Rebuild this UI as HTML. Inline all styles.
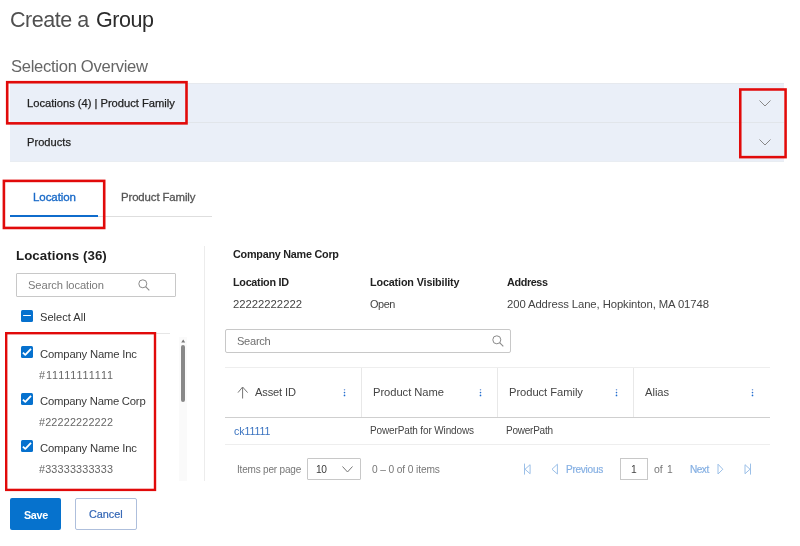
<!DOCTYPE html>
<html><head><meta charset="utf-8"><title>Create a Group</title>
<style>
html,body{margin:0;padding:0;background:#fff;width:800px;height:546px;overflow:hidden;position:relative}
body{font-family:"Liberation Sans",sans-serif}
.t{position:absolute;line-height:1;white-space:nowrap;will-change:transform}
.r{position:absolute}
</style></head><body>
<div class="t" style="left:10.4px;top:10px;font-size:21.5px;color:#333;font-weight:normal;letter-spacing:-0.45px;"><span style="color:#505050">Create a</span><span style="color:#2b2b2b;margin-left:1.5px"> Group</span></div>
<div class="t" style="left:10.5px;top:59px;font-size:16.6px;color:#666;font-weight:normal;letter-spacing:-0.300px;">Selection Overview</div>
<div class="r" style="left:10px;top:83px;width:774px;height:78.5px;background:#eaeff8"></div>
<div class="r" style="left:10px;top:83px;width:774px;height:1px;background:#e6e9ee"></div>
<div class="r" style="left:10px;top:160.5px;width:774px;height:1px;background:#e9edf2"></div>
<div class="r" style="left:10px;top:122px;width:774px;height:1px;background:#e1e5ea"></div>
<div class="t" style="left:27px;top:98px;font-size:11.2px;color:#1f1f1f;font-weight:normal;letter-spacing:-0.020px;-webkit-text-stroke:0.25px currentColor;">Locations (4) | Product Family</div>
<div class="t" style="left:27px;top:137px;font-size:11.1px;color:#1f1f1f;font-weight:normal;letter-spacing:0.030px;-webkit-text-stroke:0.25px currentColor;">Products</div>
<svg class="r" style="left:759px;top:99.5px" width="12" height="7" viewBox="0 0 12 7"><path d="M0.5 0.5 L6 6 L11.5 0.5" fill="none" stroke="#888" stroke-width="1"/></svg>
<svg class="r" style="left:759px;top:138.5px" width="12" height="7" viewBox="0 0 12 7"><path d="M0.5 0.5 L6 6 L11.5 0.5" fill="none" stroke="#888" stroke-width="1"/></svg>
<div class="t" style="left:32.5px;top:192px;font-size:11.5px;color:#1b6bc8;font-weight:normal;letter-spacing:-0.067px;-webkit-text-stroke:0.35px currentColor;">Location</div>
<div class="t" style="left:120.5px;top:192px;font-size:11.4px;color:#555;font-weight:normal;letter-spacing:-0.118px;-webkit-text-stroke:0.3px currentColor;">Product Family</div>
<div class="r" style="left:11px;top:215.5px;width:201px;height:1px;background:#dedede"></div>
<div class="r" style="left:10px;top:214.5px;width:88px;height:2.5px;background:#0f6ccc"></div>
<div class="t" style="left:15.6px;top:249px;font-size:13.3px;color:#1e1e1e;font-weight:bold;letter-spacing:0.048px;">Locations (36)</div>
<div class="r" style="left:16px;top:273px;width:160px;height:23.5px;border:1px solid #c8c8c8;box-sizing:border-box;border-radius:1px"></div>
<div class="t" style="left:28px;top:280px;font-size:11.2px;color:#7a7a7a;font-weight:normal;letter-spacing:-0.087px;">Search location</div>
<svg class="r" style="left:138.4px;top:279.3px" width="12" height="12" viewBox="0 0 12 12"><circle cx="4.8" cy="4.8" r="4" fill="none" stroke="#8a8a8a" stroke-width="1"/><path d="M7.6 7.6 L11.3 11.3" stroke="#8a8a8a" stroke-width="1.1"/></svg>
<div class="r" style="left:21px;top:309.5px;width:12px;height:12px;background:#0671ce;border-radius:1.5px"></div>
<div class="r" style="left:22.8px;top:314.6px;width:8.4px;height:1.8px;background:#fff;border-radius:1px"></div>
<div class="t" style="left:40.4px;top:312px;font-size:11.1px;color:#333;font-weight:normal;letter-spacing:0.003px;">Select All</div>
<div class="r" style="left:17px;top:333px;width:153px;height:1px;background:#e6e6e6"></div>
<svg class="r" style="left:21px;top:346.2px" width="12" height="12" viewBox="0 0 12 12"><rect x="0" y="0" width="12" height="12" rx="1.5" fill="#0671ce"/><path d="M1.9 6.6 L4.3 8.9 L10 2.9" fill="none" stroke="#fff" stroke-width="1.8" stroke-linejoin="round"/></svg>
<div class="t" style="left:40px;top:349px;font-size:11.3px;color:#3a3a3a;font-weight:normal;letter-spacing:-0.189px;">Company Name Inc</div>
<div class="t" style="left:39.4px;top:370px;font-size:10.8px;color:#666;font-weight:normal;letter-spacing:0.905px;">#11111111111</div>
<svg class="r" style="left:21px;top:393.2px" width="12" height="12" viewBox="0 0 12 12"><rect x="0" y="0" width="12" height="12" rx="1.5" fill="#0671ce"/><path d="M1.9 6.6 L4.3 8.9 L10 2.9" fill="none" stroke="#fff" stroke-width="1.8" stroke-linejoin="round"/></svg>
<div class="t" style="left:40px;top:396px;font-size:11.3px;color:#3a3a3a;font-weight:normal;letter-spacing:-0.223px;">Company Name Corp</div>
<div class="t" style="left:39.4px;top:417px;font-size:10.8px;color:#666;font-weight:normal;letter-spacing:0.174px;">#22222222222</div>
<svg class="r" style="left:21px;top:440.2px" width="12" height="12" viewBox="0 0 12 12"><rect x="0" y="0" width="12" height="12" rx="1.5" fill="#0671ce"/><path d="M1.9 6.6 L4.3 8.9 L10 2.9" fill="none" stroke="#fff" stroke-width="1.8" stroke-linejoin="round"/></svg>
<div class="t" style="left:40px;top:443px;font-size:11.3px;color:#3a3a3a;font-weight:normal;letter-spacing:-0.189px;">Company Name Inc</div>
<div class="t" style="left:39.4px;top:464px;font-size:10.8px;color:#666;font-weight:normal;letter-spacing:0.174px;">#33333333333</div>
<div class="r" style="left:179.3px;top:337px;width:7.3px;height:144px;background:#fafafa"></div>
<svg class="r" style="left:180.5px;top:338.5px" width="5" height="4" viewBox="0 0 5 4"><path d="M0.2 3.4 L2.2 0.4 L4.2 3.4Z" fill="#777"/></svg>
<div class="r" style="left:181px;top:345px;width:4px;height:56.5px;background:#888;border-radius:2px"></div>
<div class="r" style="left:204px;top:246px;width:1px;height:235px;background:#ececec"></div>
<div class="r" style="left:10.25px;top:498px;width:50.75px;height:32.2px;background:#0672cd;border-radius:2px"></div>
<div class="t" style="left:23.6px;top:510px;font-size:10.8px;color:#fff;font-weight:bold;letter-spacing:-0.339px;">Save</div>
<div class="r" style="left:75.3px;top:498px;width:61.3px;height:32.2px;border:1px solid #aebfdc;box-sizing:border-box;border-radius:2px"></div>
<div class="t" style="left:89.2px;top:509px;font-size:10.9px;color:#3366b5;font-weight:normal;letter-spacing:-0.071px;-webkit-text-stroke:0.2px currentColor;">Cancel</div>
<div class="t" style="left:232.5px;top:249px;font-size:10.8px;color:#222;font-weight:bold;letter-spacing:-0.240px;">Company Name Corp</div>
<div class="t" style="left:232.5px;top:277px;font-size:10.8px;color:#222;font-weight:bold;letter-spacing:-0.281px;">Location ID</div>
<div class="t" style="left:370px;top:277px;font-size:10.8px;color:#222;font-weight:bold;letter-spacing:-0.146px;">Location Visibility</div>
<div class="t" style="left:507px;top:277px;font-size:10.8px;color:#222;font-weight:bold;letter-spacing:-0.367px;">Address</div>
<div class="t" style="left:232.5px;top:299px;font-size:11.3px;color:#444;font-weight:normal;letter-spacing:-0.016px;">22222222222</div>
<div class="t" style="left:370px;top:299px;font-size:10.9px;color:#444;font-weight:normal;letter-spacing:-0.417px;">Open</div>
<div class="t" style="left:507px;top:299px;font-size:11.3px;color:#444;font-weight:normal;letter-spacing:-0.095px;">200 Address Lane, Hopkinton, MA 01748</div>
<div class="r" style="left:225px;top:329px;width:286px;height:24.3px;border:1px solid #c8c8c8;box-sizing:border-box;border-radius:2px"></div>
<div class="t" style="left:237px;top:336px;font-size:11.1px;color:#6f6f6f;font-weight:normal;letter-spacing:-0.287px;">Search</div>
<svg class="r" style="left:491.5px;top:335px" width="12" height="12" viewBox="0 0 12 12"><circle cx="4.8" cy="4.8" r="4" fill="none" stroke="#8a8a8a" stroke-width="1"/><path d="M7.6 7.6 L11.3 11.3" stroke="#8a8a8a" stroke-width="1.1"/></svg>
<div class="r" style="left:225px;top:367px;width:545px;height:1px;background:#eeeeee"></div>
<div class="r" style="left:225px;top:417px;width:545px;height:1px;background:#cfcfcf"></div>
<div class="r" style="left:225px;top:443.5px;width:545px;height:1px;background:#eeeeee"></div>
<div class="r" style="left:361px;top:368px;width:1px;height:49px;background:#e8e8e8"></div>
<div class="r" style="left:497px;top:368px;width:1px;height:49px;background:#e8e8e8"></div>
<div class="r" style="left:633px;top:368px;width:1px;height:49px;background:#e8e8e8"></div>
<svg class="r" style="left:237px;top:386px" width="11" height="13" viewBox="0 0 11 13"><path d="M5.6 12.5 V1.2 M1 6.6 L5.6 1 L10.6 6.6" fill="none" stroke="#777" stroke-width="1"/></svg>
<div class="t" style="left:255px;top:387px;font-size:11.1px;color:#444;font-weight:normal;letter-spacing:-0.137px;">Asset ID</div>
<div class="t" style="left:373px;top:387px;font-size:11.2px;color:#444;font-weight:normal;letter-spacing:-0.052px;">Product Name</div>
<div class="t" style="left:509.3px;top:387px;font-size:11.2px;color:#444;font-weight:normal;letter-spacing:-0.054px;">Product Family</div>
<div class="t" style="left:645px;top:387px;font-size:11.2px;color:#444;font-weight:normal;letter-spacing:-0.026px;">Alias</div>
<svg class="r" style="left:342.95px;top:388px" width="3" height="9" viewBox="0 0 3 9"><circle cx="1.5" cy="1.8" r="0.75" fill="#6f98d6"/><circle cx="1.5" cy="4.6" r="0.8" fill="#2a6fcc"/><circle cx="1.5" cy="7.45" r="0.85" fill="#1a6ad0"/></svg>
<svg class="r" style="left:478.95px;top:388px" width="3" height="9" viewBox="0 0 3 9"><circle cx="1.5" cy="1.8" r="0.75" fill="#6f98d6"/><circle cx="1.5" cy="4.6" r="0.8" fill="#2a6fcc"/><circle cx="1.5" cy="7.45" r="0.85" fill="#1a6ad0"/></svg>
<svg class="r" style="left:615.00px;top:388px" width="3" height="9" viewBox="0 0 3 9"><circle cx="1.5" cy="1.8" r="0.75" fill="#6f98d6"/><circle cx="1.5" cy="4.6" r="0.8" fill="#2a6fcc"/><circle cx="1.5" cy="7.45" r="0.85" fill="#1a6ad0"/></svg>
<svg class="r" style="left:751.00px;top:388px" width="3" height="9" viewBox="0 0 3 9"><circle cx="1.5" cy="1.8" r="0.75" fill="#6f98d6"/><circle cx="1.5" cy="4.6" r="0.8" fill="#2a6fcc"/><circle cx="1.5" cy="7.45" r="0.85" fill="#1a6ad0"/></svg>
<div class="t" style="left:233.5px;top:426px;font-size:10.6px;color:#3a73c0;font-weight:normal;letter-spacing:-0.074px;">ck11111</div>
<div class="t" style="left:369.5px;top:426px;font-size:10px;color:#444;font-weight:normal;letter-spacing:-0.135px;">PowerPath for Windows</div>
<div class="t" style="left:505.5px;top:426px;font-size:10px;color:#444;font-weight:normal;letter-spacing:-0.237px;">PowerPath</div>
<div class="t" style="left:237px;top:465px;font-size:10px;color:#777;font-weight:normal;letter-spacing:-0.192px;">Items per page</div>
<div class="r" style="left:307px;top:458px;width:54px;height:22px;border:1px solid #c8c8c8;box-sizing:border-box;border-radius:1px"></div>
<div class="t" style="left:316.3px;top:465px;font-size:10.2px;color:#3a3a3a;font-weight:normal;letter-spacing:-0.522px;">10</div>
<svg class="r" style="left:342px;top:466px" width="11" height="7" viewBox="0 0 11 7"><path d="M0.5 0.5 L5.5 6 L10.5 0.5" fill="none" stroke="#777" stroke-width="1"/></svg>
<div class="t" style="left:372px;top:465px;font-size:10.2px;color:#777;font-weight:normal;letter-spacing:-0.114px;">0 – 0 of 0 items</div>
<svg class="r" style="left:523px;top:463px" width="10" height="13" viewBox="0 0 10 13"><path d="M1.5 0.6 V11.6 M7.1 1.7 L2 6.25 L7.1 10.75 Z" fill="none" stroke="#9cc0e8" stroke-width="1"/></svg>
<svg class="r" style="left:551px;top:463px" width="8" height="13" viewBox="0 0 8 13"><path d="M6.4 1.2 L1 6.25 L6.4 11 Z" fill="none" stroke="#9cc0e8" stroke-width="1"/></svg>
<div class="t" style="left:566px;top:465px;font-size:10.1px;color:#86b0e3;font-weight:normal;letter-spacing:-0.284px;-webkit-text-stroke:0.2px currentColor;">Previous</div>
<div class="r" style="left:620px;top:458px;width:27.5px;height:21.5px;border:1px solid #c8c8c8;box-sizing:border-box"></div>
<div class="t" style="left:630.6px;top:465px;font-size:10.3px;color:#444;font-weight:normal;">1</div>
<div class="t" style="left:653.7px;top:464px;font-size:10.5px;color:#777;font-weight:normal;">of</div>
<div class="t" style="left:666.6px;top:465px;font-size:10.3px;color:#777;font-weight:normal;">1</div>
<div class="t" style="left:690px;top:465px;font-size:10.1px;color:#86b0e3;font-weight:normal;letter-spacing:-0.518px;-webkit-text-stroke:0.2px currentColor;">Next</div>
<svg class="r" style="left:716px;top:463px" width="8" height="13" viewBox="0 0 8 13"><path d="M2 1.2 L6.8 6.25 L2 11 Z" fill="none" stroke="#9cc0e8" stroke-width="1"/></svg>
<svg class="r" style="left:743px;top:463px" width="10" height="13" viewBox="0 0 10 13"><path d="M7.5 0.6 V11.6 M2 1.7 L7 6.25 L2 10.75 Z" fill="none" stroke="#9cc0e8" stroke-width="1"/></svg>
<svg class="r" style="left:0;top:0" width="800" height="546" viewBox="0 0 800 546"><rect x="7.20" y="82.20" width="179.30" height="41.15" fill="none" stroke="#e10a0a" stroke-width="2.6"/><rect x="740.27" y="89.48" width="45.30" height="67.65" fill="none" stroke="#e10a0a" stroke-width="2.55"/><rect x="3.90" y="180.90" width="100.30" height="47.05" fill="none" stroke="#e10a0a" stroke-width="2.6"/><rect x="6.20" y="333.20" width="148.80" height="156.70" fill="none" stroke="#e10a0a" stroke-width="2.4"/></svg>
</body></html>
